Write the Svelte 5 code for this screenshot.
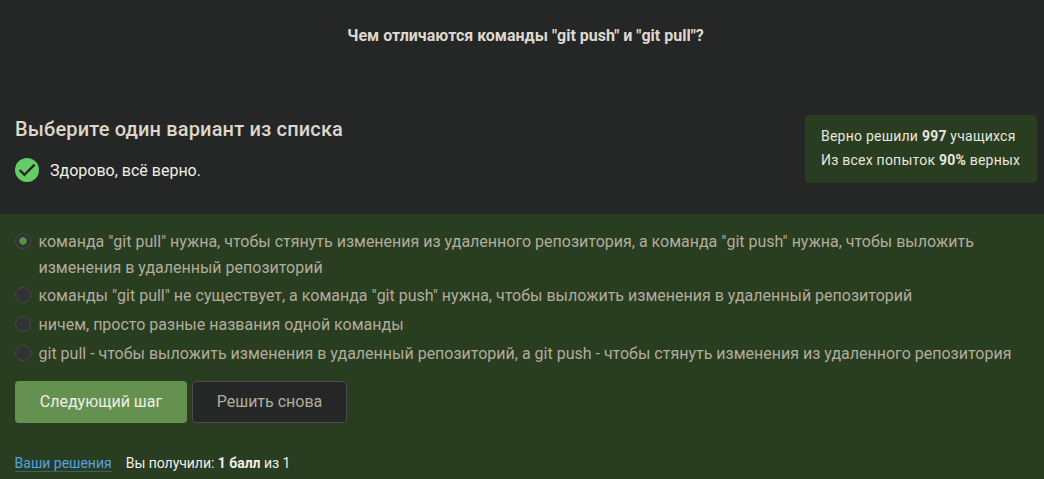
<script>
  let selected = $state(0);
  const options = [
    'команда "git pull" нужна, чтобы стянуть изменения из удаленного репозитория, а команда "git push" нужна, чтобы выложить изменения в удаленный репозиторий',
    'команды "git pull" не существует, а команда "git push" нужна, чтобы выложить изменения в удаленный репозиторий',
    'ничем, просто разные названия одной команды',
    'git pull - чтобы выложить изменения в удаленный репозиторий, а git push - чтобы стянуть изменения из удаленного репозитория'
  ];
</script>

<main>
  <section class="top">
    <h1>Чем отличаются команды "git push" и "git pull"?</h1>
    <div class="head">
      <div>
        <h2>Выберите один вариант из списка</h2>
        <div class="status">
          <svg width="24" height="24" viewBox="0 0 24 24"><circle cx="12" cy="12" r="12" fill="#66cc66" /><path d="M4.7 12l4.7 4.8L19.6 6.7" fill="none" stroke="#252726" stroke-width="2.4" /></svg>
          <span>Здорово, всё верно.</span>
        </div>
      </div>
      <aside>
        <div>Верно решили <b>997</b> учащихся</div>
        <div>Из всех попыток <b>90%</b> верных</div>
      </aside>
    </div>
  </section>
  <section class="quiz">
    <div class="options">
      {#each options as text, i}
        <label>
          <input type="radio" name="answer" value={i} bind:group={selected} />
          <span>{text}</span>
        </label>
      {/each}
    </div>
    <div class="buttons">
      <button class="next">Следующий шаг</button>
      <button class="again">Решить снова</button>
    </div>
    <footer>
      <a href="#solutions">Ваши решения</a>
      <span>Вы получили: <b>1 балл</b> из 1</span>
    </footer>
  </section>
</main>

<style>
  :global(body) { background: #252726; }
  main { font: 16px/26px Roboto, sans-serif; color: #f0eee9; height: 479px; display: flex; flex-direction: column; overflow: hidden; }
  .top { height: 214px; box-sizing: border-box; padding: 23px 7px 0 15px; background: #252726; }
  h1 { margin: 0; padding-right: 1px; text-align: center; font-size: 16px; line-height: 26px; font-weight: 700; color: #ddd9d0; }
  .head { display: flex; justify-content: space-between; margin-top: 66px; }
  h2 { margin: 0; font-size: 20px; line-height: 28px; font-weight: 500; letter-spacing: 0.16px; color: #ddd6c9; }
  .status { display: flex; align-items: center; gap: 11px; margin-top: 15px; height: 24px; }
  .status span { padding-top: 2px; }
  aside { box-sizing: border-box; width: 232px; height: 68px; padding: 9px 16px; border-radius: 4px; background: #293d20; font-size: 14px; line-height: 24px; letter-spacing: 0.23px; white-space: nowrap; color: #e8e6df; }
  .quiz { flex: 1; background: #293d20; padding: 15px 15px 0; }
  .options { display: flex; flex-direction: column; gap: 3px; color: #b3ac9e; }
  label { display: flex; gap: 7.5px; }
  label:first-child { margin-bottom: -1px; }
  input { appearance: none; flex: none; box-sizing: border-box; width: 16px; height: 16px; margin: 4px 0 0; border: 1px solid #474a4b; border-radius: 50%; background: #303233; }
  input:checked { background: radial-gradient(circle, #589342 0 3.3px, #303233 4.2px); }
  .buttons { display: flex; gap: 5px; margin-top: 14px; }
  button { box-sizing: border-box; height: 42px; border-radius: 4px; padding: 0; font: 16px/24px Roboto, sans-serif; }
  .next { width: 172px; background: #659150; border: 0; color: #f0eee5; }
  .again { width: 155px; background: #252726; border: 1px solid #4a4c4d; color: #b3ac9e; }
  footer { display: flex; gap: 14px; margin: 32px 0 0 -0.4px; font-size: 14px; line-height: 17px; }
  footer span { letter-spacing: -0.03px; }
  a { height: 16px; color: #58a0e4; text-decoration: none; border-bottom: 1px solid #356273; }
</style>
